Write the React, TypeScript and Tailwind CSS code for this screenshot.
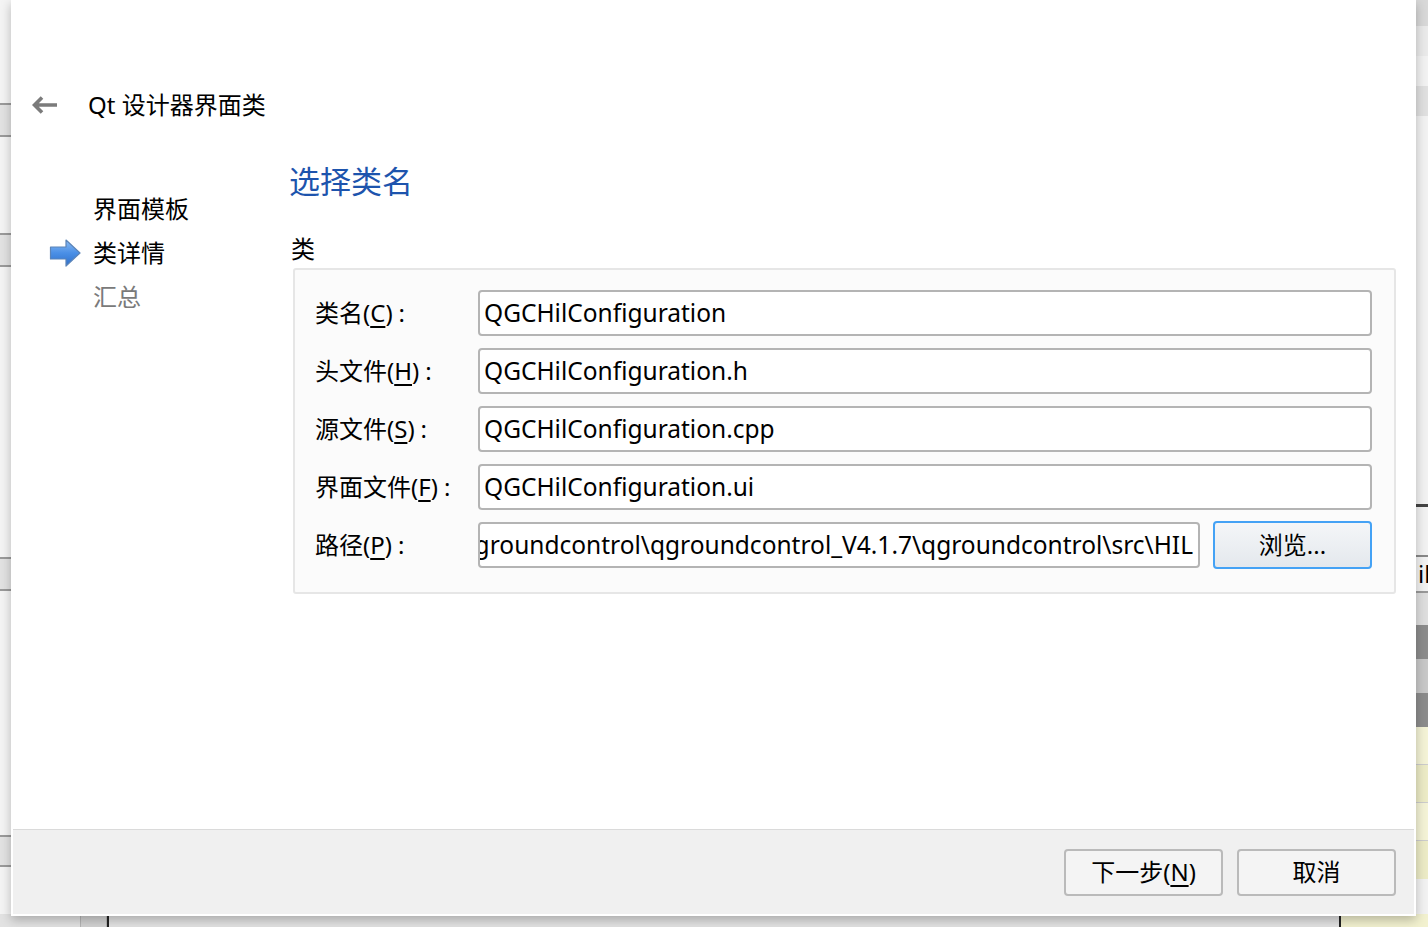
import React from 'react'

const ui = { fontFamily: '"Noto Sans", "Noto Sans CJK SC", sans-serif' }

function Label({ label, ul }: { label: string; ul: string }) {
  return (
    <div className="w-[163px] shrink-0 text-[24px] text-black whitespace-nowrap">
      {label}(<span className="underline underline-offset-4">{ul}</span>)<span className="ml-[6px]">:</span>
    </div>
  )
}

function Field({ label, ul, value }: { label: string; ul: string; value: string }) {
  return (
    <div className="flex items-center h-[46px]">
      <Label label={label} ul={ul} />
      <div className="flex-1 min-w-0 h-[46px] border-2 border-[#b4b4b4] rounded-[4px] bg-white flex items-center px-[4px] text-[24.5px] text-black">
        {value}
      </div>
    </div>
  )
}

function BackArrow() {
  return (
    <svg width="26" height="18" viewBox="0 0 26 18">
      <path d="M10 1.5 L2.5 9 L10 16.5 M3 9 H25" fill="none" stroke="#7b7b7b" strokeWidth="3.6" strokeLinejoin="miter" />
    </svg>
  )
}

function StepArrow() {
  return (
    <svg width="33" height="30" viewBox="0 0 33 30">
      <defs>
        <linearGradient id="ag" x1="0" y1="0" x2="0" y2="1">
          <stop offset="0" stopColor="#8cbcf3" />
          <stop offset="0.5" stopColor="#4a8fe6" />
          <stop offset="1" stopColor="#2f6fc9" />
        </linearGradient>
      </defs>
      <path d="M1.5 9 H17 V2 L31 15 L17 28 V21 H1.5 Z" fill="url(#ag)" stroke="#5b84b8" strokeWidth="1.2" strokeLinejoin="round" />
    </svg>
  )
}

export default function App() {
  return (
    <div className="relative w-[1428px] h-[927px] overflow-hidden bg-[#e6e6e6]" style={ui}>
      {/* background application behind the dialog */}
      <div className="absolute left-0 top-0 w-[12px] h-[927px] bg-[#f4f4f4] overflow-hidden">
        <div className="mt-[103px] h-[34px] border-y-2 border-[#9a9a9a] bg-[#e2e2e2]" />
        <div className="mt-[96px] h-[34px] border-y-2 border-[#9a9a9a] bg-[#e2e2e2]" />
        <div className="mt-[290px] h-[34px] border-y-2 border-[#9a9a9a] bg-[#e2e2e2]" />
        <div className="mt-[244px] h-[32px] border-y-2 border-[#9a9a9a] bg-[#e2e2e2]" />
      </div>
      <div className="absolute left-[1416px] top-0 w-[12px] h-[927px] bg-[#f2f2f2] overflow-hidden">
        <div className="h-[26px] bg-[#d8d8d8]" />
        <div className="h-[30px] bg-[#eaeaea]" />
        <div className="h-[30px]" />
        <div className="h-[30px] bg-[#e0e0e0]" />
        <div className="h-[388px]" />
        <div className="h-[3px] bg-[#444]" />
        <div className="h-[48px]" />
        <div className="h-[2px] bg-[#888]" />
        <div className="pl-[2px] h-[34px] text-[24px] leading-[34px] text-black">il</div>
        <div className="h-[2px] bg-[#999]" />
        <div className="h-[32px] bg-[#dedede]" />
        <div className="h-[34px] bg-[#8c8c8c]" />
        <div className="h-[34px] bg-[#c8c8c8]" />
        <div className="h-[34px] bg-[#8c8c8c]" />
        <div className="h-[38px] bg-[#f4f3d6] border-b border-[#ccc]" />
        <div className="h-[38px] bg-[#ecebc6] border-b border-[#ccc]" />
        <div className="h-[38px] bg-[#f4f3d6] border-b border-[#ccc]" />
        <div className="h-[38px] bg-[#ecebc6]" />
      </div>
      <div className="absolute left-0 top-[914px] w-[1428px] h-[13px] bg-[#e2e2e2] flex">
        <div className="ml-[80px] w-[27px] border-x border-[#b5b5b5] bg-[#d2d2d2]" />
        <div className="w-[2px] bg-[#222]" />
        <div className="ml-[1230px] w-[2px] bg-[#222]" />
        <div className="flex-1 bg-[#f2f1cf]" />
      </div>

      {/* dialog window */}
      <div className="absolute left-[11px] top-0 w-[1405px] h-[916px] bg-white border-x-2 border-b-2 border-white shadow-[0_4px_10px_rgba(0,0,0,0.25)] flex flex-col">
        <div className="flex-1 flex flex-col">
          <div className="flex items-center h-[40px] mt-[85px]">
            <div className="ml-[19px] w-[56px] shrink-0 flex">
              <BackArrow />
            </div>
            <div className="text-[24px] text-black">Qt 设计器界面类</div>
          </div>

          <div className="flex mt-[41px]">
            <div className="w-[276px] shrink-0 pt-[21px] flex flex-col">
              <div className="h-[44px] flex items-center pl-[80px] text-[24px] text-black">界面模板</div>
              <div className="h-[44px] flex items-center pl-[36px] text-[24px] text-black">
                <div className="w-[44px] shrink-0 flex">
                  <StepArrow />
                </div>
                类详情
              </div>
              <div className="h-[44px] flex items-center pl-[80px] text-[24px] text-[#7a7a7a]">汇总</div>
            </div>

            <div className="flex-1 min-w-0 mr-[18px]">
              <div className="h-[40px] flex items-center text-[31px] text-[#1d54ad] -mt-[5px]">选择类名</div>
              <div className="h-[34px] flex items-center mt-[31px] text-[24px] text-black pl-[2px]">类</div>
              <div className="mt-[2px] ml-[4px] border-2 border-[#e6e6e6] rounded-[3px] bg-[#fbfbfb] pl-[20px] pr-[22px] pt-[20px] pb-[24px] flex flex-col gap-[12px]">
                <Field label="类名" ul="C" value="QGCHilConfiguration" />
                <Field label="头文件" ul="H" value="QGCHilConfiguration.h" />
                <Field label="源文件" ul="S" value="QGCHilConfiguration.cpp" />
                <Field label="界面文件" ul="F" value="QGCHilConfiguration.ui" />
                <div className="flex items-center h-[46px]">
                  <Label label="路径" ul="P" />
                  <div className="flex-1 min-w-0 h-[46px] border-2 border-[#b4b4b4] rounded-[4px] bg-white flex items-center justify-end overflow-hidden pr-[5px] text-[24.5px] text-black whitespace-nowrap">
                    <span className="shrink-0">C:\Users\dev\Desktop\qgroundcontrol\qgroundcontrol_V4.1.7\qgroundcontrol\src\HIL</span>
                  </div>
                  <button className="ml-[13px] shrink-0 w-[159px] h-[48px] border-2 border-[#44a2f5] rounded-[4px] bg-gradient-to-b from-[#f4f6f8] to-[#e4e8ed] text-[24px] text-black flex items-center justify-center">
                    浏览...
                  </button>
                </div>
              </div>
            </div>
          </div>
        </div>

        {/* footer */}
        <div className="h-[85px] shrink-0 bg-[#f0f0f0] border-t border-[#dadada] flex items-center justify-end gap-[14px] pr-[18px]">
          <button className="w-[159px] h-[47px] border-2 border-[#bababa] rounded-[4px] bg-[#f4f4f4] text-[24px] text-black flex items-center justify-center">
            下一步(<span className="underline underline-offset-4">N</span>)
          </button>
          <button className="w-[159px] h-[47px] border-2 border-[#bababa] rounded-[4px] bg-[#f4f4f4] text-[24px] text-black flex items-center justify-center">
            取消
          </button>
        </div>
      </div>
    </div>
  )
}
